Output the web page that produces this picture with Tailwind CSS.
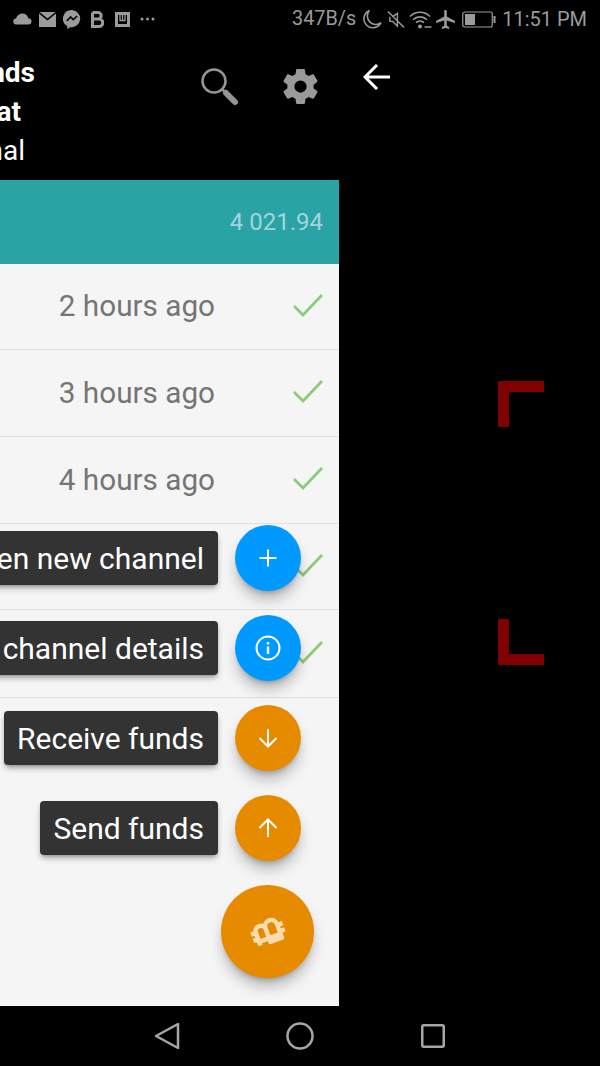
<!DOCTYPE html>
<html lang="en">
<head>
  <meta charset="UTF-8" />
  <meta name="viewport" content="width=device-width, initial-scale=1.0"/>
  <title>Channels</title>
  <script src="https://cdn.jsdelivr.net/npm/@tailwindcss/browser@4"></script>
</head>
<body class="bg-black">
  <div class="relative w-[600px] h-[1066px] overflow-hidden bg-black flex flex-col font-['Roboto',sans-serif]">

    <!-- Status bar -->
    <div class="h-[38px] flex items-center justify-between pl-[13px] pr-[13px] text-[#9b9b9b] shrink-0">
      <div class="flex items-center gap-[7px]">
        <svg width="19" height="12" viewBox="0 0 19 12" fill="#9b9b9b"><path d="M3.500 11.500a3 3 0 0 1-.5-6C3.800 2.500 6.500.5 9.500.5c2.800 0 5 1.800 5.800 4.800a3.100 3.100 0 0 1 .2 6.200z"/></svg>
        <svg width="17" height="15" viewBox="0 0 17 15"><path fill="#9b9b9b" d="M.5 0h16L8.500 6.500zM0 1.500V15h17V1.500L8.500 8.500z"/></svg>
        <svg width="18" height="19" viewBox="0 0 18 19"><path fill="#9b9b9b" d="M9 0a9 8.600 0 0 0-4.800 15.900V19l3-1.700A9 8.600 0 1 0 9 0z"/><path fill="none" stroke="#000" stroke-width="1.600" d="M3.800 11l3.800-4 2.600 2.600L14.200 6"/></svg>
        <svg class="ml-[3px]" width="13" height="17" viewBox="0 0 13 17"><path fill="none" stroke="#9b9b9b" stroke-width="3" d="M1.500 1.500h5.500a3 3 0 0 1 0 6.500H1.500M1.500 8h6.500a3.200 3.200 0 0 1 0 7.500H1.500zM1.500 1.500V8"/></svg>
        <svg class="ml-[4px]" width="15" height="15" viewBox="0 0 15 15"><path fill="#9b9b9b" d="M0 0h15v15H0z"/><path fill="#000" d="M3 3h9v9H3z"/><path fill="none" stroke="#9b9b9b" stroke-width="1.300" d="M5 3v5.500h2.500V3M7.500 8.500H10V3"/></svg>
        <svg class="ml-[3px]" width="15" height="4" viewBox="0 0 15 4" fill="#9b9b9b"><circle cx="2" cy="2" r="1.500"/><circle cx="7.500" cy="2" r="1.500"/><circle cx="13" cy="2" r="1.500"/></svg>
      </div>
      <div class="flex items-center">
        <span class="text-[19.800px] leading-none">347B/s</span>
        <svg class="ml-[6px]" width="20" height="20" viewBox="0 0 19 19"><path fill="none" stroke="#9b9b9b" stroke-width="1.500" d="M7 1.500A8.500 8.500 0 1 0 18 13 8 8 0 0 1 7 1.500z"/></svg>
        <svg class="ml-[5px]" width="18" height="19" viewBox="0 0 19 19"><path fill="none" stroke="#9b9b9b" stroke-width="1.500" d="M1 1l17 17M3 6.500v5h3l5 5V3L6 6.500"/></svg>
        <svg class="ml-[4px]" width="23" height="19" viewBox="0 0 23 19"><path fill="none" stroke="#9b9b9b" stroke-width="1.600" d="M1 6.500a14 14 0 0 1 20 0M4 9.700a10 10 0 0 1 14 0M7 12.700a6 6 0 0 1 8 0"/><circle cx="11" cy="16.500" r="2" fill="#9b9b9b"/><path stroke="#9b9b9b" stroke-width="1.500" d="M15.500 17h7"/></svg>
        <svg class="ml-[4px]" width="19" height="19" viewBox="0 0 19 19"><path fill="#9b9b9b" d="M8.200 1c0-1.300 2.600-1.300 2.600 0v5.500L19 11v2l-8.200-2.500v5l2.400 1.800V19l-3.700-1-3.700 1v-1.700l2.400-1.800v-5L0 13v-2l8.200-4.500z"/></svg>
        <svg class="ml-[7px]" width="34" height="17" viewBox="0 0 34 17"><rect x=".75" y="1" width="29.500" height="15" rx="2" fill="none" stroke="#9b9b9b" stroke-width="1.200"/><rect x="3" y="3" width="10" height="11" fill="#9b9b9b"/><rect x="31.500" y="5" width="2" height="7" fill="#9b9b9b"/></svg>
        <span class="ml-[6px] text-[20px] leading-none">11:51 PM</span>
      </div>
    </div>

    <!-- Main area -->
    <div class="flex flex-1 min-h-0">
      <div class="w-[339px] shrink-0 flex flex-col">
        <div class="h-[142px] shrink-0 flex items-start">
          <div class="w-[35px] pt-[15px] text-white text-[28px] leading-[39px] shrink-0">
            <div class="flex justify-end whitespace-nowrap font-bold">Funds</div>
            <div class="flex justify-end whitespace-nowrap font-bold pr-[14px]">Stat</div>
            <div class="flex justify-end whitespace-nowrap pr-[10px]">Signal</div>
          </div>
          <svg class="ml-[166px] mt-[30px] shrink-0" width="37" height="38" viewBox="0 0 37 38"><circle cx="13" cy="13" r="11.500" fill="none" stroke="#969696" stroke-width="2.500"/><path stroke="#969696" stroke-width="2.500" d="M21 21l4 4"/><path stroke="#969696" stroke-width="6" stroke-linecap="round" d="M25 25l9 9"/></svg>
          <svg class="ml-[45px] mt-[31px] shrink-0" width="35" height="35" viewBox="2 2 20 20"><path fill="#9a9a9a" d="M19.430 12.980c.04-.32.070-.640.070-.980s-.03-.660-.07-.980l2.110-1.650c.19-.150.240-.420.120-.640l-2-3.460c-.12-.220-.390-.300-.610-.220l-2.490 1c-.520-.400-1.080-.730-1.690-.980l-.38-2.650A.488.488 0 0 0 14 2h-4c-.250 0-.460.180-.490.420l-.380 2.650c-.610.250-1.170.590-1.690.980l-2.490-1c-.230-.090-.490 0-.610.220l-2 3.460c-.130.220-.070.490.120.640l2.110 1.650c-.040.320-.070.650-.070.980s.03.660.07.980l-2.110 1.650c-.190.150-.240.420-.120.640l2 3.460c.12.220.390.300.610.220l2.490-1c.520.400 1.080.730 1.690.980l.38 2.650c.030.240.240.420.490.420h4c.250 0 .460-.180.490-.420l.380-2.650c.610-.250 1.170-.590 1.690-.980l2.490 1c.230.090.490 0 .610-.220l2-3.460c.120-.220.070-.490-.120-.640zM12 15.500a3.500 3.500 0 1 1 0-7 3.500 3.500 0 0 1 0 7z"/></svg>
        </div>
        <div class="h-[84px] shrink-0 bg-[#29a3a3] flex items-center justify-end pr-[16px] text-[24px] text-[#a3d3e0]">4 021.94</div>
        <div class="flex-1 bg-[#f5f5f5] flex flex-col">
          <div class="h-[86px] border-b border-[#e0e0e0] shrink-0 flex items-center justify-end pr-[16px] text-[29.700px] text-[#757575]">
            <span>2 hours ago</span>
            <svg class="ml-[78px] -mt-[4px]" width="30" height="24" viewBox="0 0 30 24"><path fill="none" stroke="#8ccb78" stroke-width="2.800" d="M1 13l9 9L29 2"/></svg>
          </div>
          <div class="h-[87px] border-b border-[#e0e0e0] shrink-0 flex items-center justify-end pr-[16px] text-[29.700px] text-[#757575]">
            <span>3 hours ago</span>
            <svg class="ml-[78px] -mt-[4px]" width="30" height="24" viewBox="0 0 30 24"><path fill="none" stroke="#8ccb78" stroke-width="2.800" d="M1 13l9 9L29 2"/></svg>
          </div>
          <div class="h-[87px] border-b border-[#e0e0e0] shrink-0 flex items-center justify-end pr-[16px] text-[29.700px] text-[#757575]">
            <span>4 hours ago</span>
            <svg class="ml-[78px] -mt-[4px]" width="30" height="24" viewBox="0 0 30 24"><path fill="none" stroke="#8ccb78" stroke-width="2.800" d="M1 13l9 9L29 2"/></svg>
          </div>
          <div class="h-[86px] border-b border-[#e0e0e0] shrink-0 flex items-center justify-end pr-[16px]">
            <svg class="-mt-[4px]" width="30" height="24" viewBox="0 0 30 24"><path fill="none" stroke="#8ccb78" stroke-width="2.800" d="M1 13l9 9L29 2"/></svg>
          </div>
          <div class="h-[88px] border-b border-[#e0e0e0] shrink-0 flex items-center justify-end pr-[16px]">
            <svg class="-mt-[4px]" width="30" height="24" viewBox="0 0 30 24"><path fill="none" stroke="#8ccb78" stroke-width="2.800" d="M1 13l9 9L29 2"/></svg>
          </div>
        </div>
      </div>
      <div class="flex-1 pl-[24px] pt-[26px]">
        <svg width="28" height="26" viewBox="0 0 28 26"><path fill="none" stroke="#fff" stroke-width="3" d="M27 13H3M14 1L2 13l12 12"/></svg>
      </div>
    </div>

    <!-- Bottom nav -->
    <div class="h-[60px] shrink-0 relative">
      <svg class="absolute left-[154px] top-[16px]" width="26" height="28" viewBox="0 0 26 28"><path fill="none" stroke="#a6a6a6" stroke-width="2.500" stroke-linejoin="round" d="M24 2v24L2 14z"/></svg>
      <svg class="absolute left-[286px] top-[16px]" width="28" height="28" viewBox="0 0 28 28"><circle cx="14" cy="14" r="12.500" fill="none" stroke="#a6a6a6" stroke-width="2.500"/></svg>
      <svg class="absolute left-[421px] top-[18px]" width="24" height="24" viewBox="0 0 24 24"><rect x="1.250" y="1.250" width="21.500" height="21.500" rx="1.500" fill="none" stroke="#a6a6a6" stroke-width="2.500"/></svg>
    </div>

    <!-- Viewfinder corners -->
    <div class="absolute left-[498px] top-[381px] w-[46px] h-[46px] border-l-[11px] border-t-[11px] border-[#800000]"></div>
    <div class="absolute left-[498px] top-[619px] w-[46px] h-[46px] border-l-[11px] border-b-[11px] border-[#800000]"></div>

    <!-- FAB menu -->
    <div class="absolute right-[382px] top-[531px] h-[54px] pl-[13px] pr-[14px] pt-[1px] flex items-center whitespace-nowrap bg-[#333] rounded text-white text-[30px] shadow-md shadow-black/30">Open new channel</div>
    <div class="absolute right-[382px] top-[621px] h-[54px] pl-[13px] pr-[14px] pt-[1px] flex items-center whitespace-nowrap bg-[#333] rounded text-white text-[30px] shadow-md shadow-black/30">View channel details</div>
    <div class="absolute right-[382px] top-[711px] h-[54px] pl-[13px] pr-[14px] pt-[1px] flex items-center whitespace-nowrap bg-[#333] rounded text-white text-[30px] shadow-md shadow-black/30">Receive funds</div>
    <div class="absolute right-[382px] top-[801px] h-[54px] pl-[13px] pr-[14px] pt-[1px] flex items-center whitespace-nowrap bg-[#333] rounded text-white text-[30px] shadow-md shadow-black/30">Send funds</div>

    <div class="absolute left-[235px] top-[525px] w-[66px] h-[66px] rounded-full bg-[#0099ff] flex items-center justify-center shadow-lg shadow-black/30">
      <svg width="20" height="20" viewBox="0 0 20 20"><path stroke="#fff" stroke-width="2" d="M10 1.500v17M1.500 10h17"/></svg>
    </div>
    <div class="absolute left-[235px] top-[615px] w-[66px] h-[66px] rounded-full bg-[#0099ff] flex items-center justify-center shadow-lg shadow-black/30">
      <svg width="26" height="26" viewBox="0 0 26 26"><circle cx="13" cy="13" r="11.500" fill="none" stroke="#fff" stroke-width="2"/><path stroke="#fff" stroke-width="2.400" d="M13 11.500V19M13 7v2.500"/></svg>
    </div>
    <div class="absolute left-[235px] top-[705px] w-[66px] h-[66px] rounded-full bg-[#e68a00] flex items-center justify-center shadow-lg shadow-black/30">
      <svg width="20" height="20" viewBox="0 0 20 20"><path fill="none" stroke="#fff" stroke-width="2" d="M10 1v17M1.500 10l8.500 8.500 8.500-8.500"/></svg>
    </div>
    <div class="absolute left-[235px] top-[795px] w-[66px] h-[66px] rounded-full bg-[#e68a00] flex items-center justify-center shadow-lg shadow-black/30">
      <svg width="20" height="20" viewBox="0 0 20 20"><path fill="none" stroke="#fff" stroke-width="2" d="M10 19V2M1.500 10L10 1.500l8.500 8.500"/></svg>
    </div>
    <div class="absolute left-[221px] top-[885px] w-[93px] h-[93px] rounded-full bg-[#e68a00] flex items-center justify-center shadow-lg shadow-black/30">
      <svg width="38" height="38" viewBox="0 0 34 34"><g transform="rotate(-110 17 17)"><path fill="none" stroke="#fbdcae" stroke-width="4" stroke-linejoin="round" d="M8 6.500h12a4.500 4.500 0 0 1 0 9.500H8M8 16h13a5.500 5.500 0 0 1 0 11H8zM11.500 6.500V27M14 2v4M20 2v4M14 27.500V32M20 27.500V32"/></g></svg>
    </div>
  </div>
</body>
</html>
